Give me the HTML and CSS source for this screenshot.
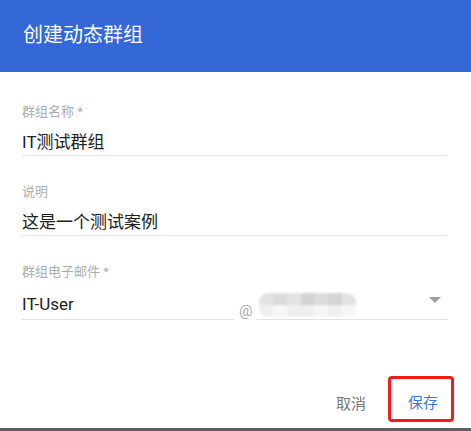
FILE: index.html
```html
<!DOCTYPE html>
<html lang="zh-CN">
<head>
<meta charset="utf-8">
<title>创建动态群组</title>
<link rel="stylesheet" href="styles.css">
</head>
<body>
<div class="dialog">
  <header class="dialog-header">
    <h1 class="dialog-title">创建动态群组</h1>
  </header>
  <main class="dialog-body">
    <div class="field">
      <div class="field-label">群组名称 *</div>
      <div class="field-value">IT测试群组</div>
    </div>
    <div class="field">
      <div class="field-label">说明</div>
      <div class="field-value">这是一个测试案例</div>
    </div>
    <div class="field field-email">
      <div class="field-label">群组电子邮件 *</div>
      <div class="email-row">
        <div class="email-user">IT-User</div>
        <div class="email-at">@</div>
        <div class="email-domain">
          <div class="blur">
            <span class="c2"></span><span class="c3"></span><span class="c2"></span><span class="c4"></span><span class="c3"></span><span class="c4"></span><span class="c2"></span>
            <span class="c1"></span><span class="c0"></span><span class="c1"></span><span class="c1"></span><span class="c0"></span><span class="c1"></span><span class="c0"></span>
          </div>
          <span class="caret"></span>
        </div>
      </div>
    </div>
  </main>
  <footer class="dialog-footer">
    <button class="btn btn-cancel">取消</button>
    <button class="btn btn-save">保存</button>
  </footer>
  <div class="bottom-bar"></div>
</div>
</body>
</html>
```
FILE: styles.css
```css
* { box-sizing: border-box; }
html, body {
  margin: 0;
  padding: 0;
  background: #ffffff;
}
body {
  font-family: Roboto, "Noto Sans CJK SC", "Liberation Sans", sans-serif;
  color: #212121;
}
.dialog {
  width: 471px;
  height: 431px;
  display: flex;
  flex-direction: column;
  background: #fff;
}
.dialog-header {
  height: 72px;
  background: #3468d6;
  display: flex;
  align-items: center;
  padding: 0 0 2px 23px;
  flex: none;
}
.dialog-title {
  margin: 0;
  font-size: 20px;
  font-weight: 400;
  color: #ffffff;
  line-height: 24px;
}
.dialog-body {
  padding: 32px 24px 0 22px;
}
.field {
  margin-bottom: 28px;
}
.field-label {
  font-size: 13px;
  line-height: 16px;
  color: #adadad;
  margin-bottom: 10px;
}
.field-value {
  font-size: 17px;
  line-height: 24px;
  padding-bottom: 1px;
  border-bottom: 1px solid #e2e2e2;
}
.field-email .field-label {
  margin-bottom: 12px;
}
.email-row {
  display: flex;
  align-items: flex-end;
}
.email-user {
  width: 212px;
  font-size: 17px;
  line-height: 24px;
  padding-bottom: 3px;
  border-bottom: 1px solid #e2e2e2;
}
.email-at {
  width: 22px;
  padding-left: 5px;
  font-size: 15px;
  line-height: 18px;
  color: #aaaaaa;
  padding-bottom: 0;
}
.email-domain {
  flex: 1;
  height: 28px;
  border-bottom: 1px solid #e2e2e2;
  display: flex;
  align-items: flex-start;
  justify-content: space-between;
  padding: 1px 6px 0 3px;
}
.blur {
  width: 97px;
  height: 24px;
  border-radius: 9px;
  overflow: hidden;
  display: grid;
  grid-template-columns: repeat(7, 1fr);
  grid-template-rows: 1fr 1fr;
  filter: blur(1px);
}
.blur span { display: block; }
.c0 { background: #f6f6f6; }
.c1 { background: #efefef; }
.c2 { background: #e3e3e3; }
.c3 { background: #dcdcdc; }
.c4 { background: #d4d4d4; }
.caret {
  width: 0;
  height: 0;
  margin-top: 4px;
  border-left: 6px solid transparent;
  border-right: 6px solid transparent;
  border-top: 6px solid #9e9e9e;
}
.dialog-footer {
  margin-top: auto;
  display: flex;
  justify-content: flex-end;
  align-items: center;
  padding: 0 17px 6px 0;
}
.btn {
  font-family: Roboto, "Noto Sans CJK SC", "Liberation Sans", sans-serif;
  font-size: 15px;
  background: none;
  border: none;
  padding: 0;
  cursor: pointer;
}
.btn-cancel {
  color: #767676;
  margin-right: 22px;
  margin-top: 6px;
}
.btn-save {
  color: #3f74dc;
  width: 66px;
  height: 46px;
  border: 3px solid #f41b1b;
  border-radius: 4px;
  padding: 5px 0 0 4px;
}
.bottom-bar {
  height: 3px;
  background: #5f5f5f;
  flex: none;
}
```
